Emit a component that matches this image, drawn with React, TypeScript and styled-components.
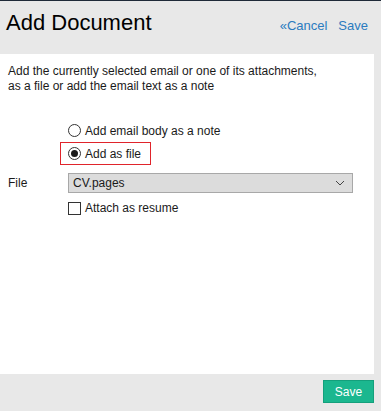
import React, { FC } from 'react';
import styled, { createGlobalStyle } from 'styled-components';

const GlobalStyle = createGlobalStyle`
  html, body {
    margin: 0;
    padding: 0;
    background: #e8e8e8;
  }
  body {
    font-family: "Liberation Sans", Arial, sans-serif;
  }
`;

const App: FC = () => {
  return (
    <PageStyled>
      <GlobalStyle />
      <HeaderStyled>
        <TitleStyled>Add Document</TitleStyled>
        <HeaderLinksStyled>
          <LinkStyled href="#">«Cancel</LinkStyled>
          <LinkStyled href="#">Save</LinkStyled>
        </HeaderLinksStyled>
      </HeaderStyled>

      <PanelStyled>
        <IntroStyled>
          Add the currently selected email or one of its attachments,
          <br />
          as a file or add the email text as a note
        </IntroStyled>

        <OptionGroupStyled>
          <OptionStyled>
            <RadioStyled $checked={false} />
            <span>Add email body as a note</span>
          </OptionStyled>
          <OptionStyled $highlighted>
            <RadioStyled $checked />
            <span>Add as file</span>
          </OptionStyled>
        </OptionGroupStyled>

        <FieldRowStyled>
          <FieldLabelStyled>File</FieldLabelStyled>
          <SelectStyled>
            <span>CV.pages</span>
            <svg width="10" height="6" viewBox="0 0 10 6">
              <path d="M1 1 L5 5 L9 1" fill="none" stroke="#444" strokeWidth="1" />
            </svg>
          </SelectStyled>
        </FieldRowStyled>

        <CheckRowStyled>
          <CheckboxStyled />
          <span>Attach as resume</span>
        </CheckRowStyled>
      </PanelStyled>

      <FooterStyled>
        <SaveButtonStyled>Save</SaveButtonStyled>
      </FooterStyled>
    </PageStyled>
  );
};

export default App;

const PageStyled = styled.div`
  width: 381px;
  height: 411px;
  background: #e8e8e8;
  border-top: 1px solid #1f2a38;
  box-sizing: border-box;
  display: flex;
  flex-direction: column;
`;

const HeaderStyled = styled.div`
  height: 53px;
  display: flex;
  justify-content: space-between;
  align-items: flex-start;
  padding: 0 13px 0 6px;
  flex-shrink: 0;
`;

const TitleStyled = styled.h1`
  margin: 9px 0 0 0;
  font-size: 22px;
  line-height: 26px;
  font-weight: normal;
  color: #000;
`;

const HeaderLinksStyled = styled.div`
  display: flex;
  gap: 11px;
  margin-top: 17px;
`;

const LinkStyled = styled.a`
  font-size: 13px;
  line-height: 15px;
  color: #2b7bbf;
  text-decoration: none;
`;

const PanelStyled = styled.div`
  background: #fff;
  margin-right: 7px;
  height: 320px;
  padding: 10px 8px 0 8px;
  box-sizing: border-box;
  font-size: 12px;
  color: #1a1a1a;
`;

const IntroStyled = styled.p`
  margin: 0;
  line-height: 15px;
`;

const OptionGroupStyled = styled.div`
  margin: 25px 0 0 52px;
  display: flex;
  flex-direction: column;
  align-items: flex-start;
`;

const OptionStyled = styled.label<{ $highlighted?: boolean }>`
  display: inline-flex;
  align-items: center;
  gap: 4px;
  height: 23px;
  padding: 0 7px;
  box-sizing: border-box;
  border: 1px solid ${(p) => (p.$highlighted ? '#e0242b' : 'transparent')};
  width: ${(p) => (p.$highlighted ? '91px' : 'auto')};
  font-size: 12px;
`;

const RadioStyled = styled.span<{ $checked: boolean }>`
  width: 13px;
  height: 13px;
  border-radius: 50%;
  border: 1px solid #333;
  box-sizing: border-box;
  display: inline-flex;
  align-items: center;
  justify-content: center;
  background: #fff;
  &::after {
    content: '';
    width: 7px;
    height: 7px;
    border-radius: 50%;
    background: ${(p) => (p.$checked ? '#1a1a1a' : 'transparent')};
  }
`;

const FieldRowStyled = styled.div`
  display: flex;
  align-items: center;
  margin-top: 8px;
`;

const FieldLabelStyled = styled.span`
  width: 60px;
  font-size: 12px;
`;

const SelectStyled = styled.div`
  width: 285px;
  height: 20px;
  box-sizing: border-box;
  border: 1px solid #a8a8a8;
  background: #dcdcdc;
  display: flex;
  align-items: center;
  justify-content: space-between;
  padding: 0 7px 0 4px;
  font-size: 12px;
`;

const CheckRowStyled = styled.label`
  display: flex;
  align-items: center;
  gap: 4px;
  margin: 8px 0 0 60px;
  font-size: 12px;
`;

const CheckboxStyled = styled.span`
  width: 13px;
  height: 13px;
  border: 1px solid #333;
  box-sizing: border-box;
  background: #fff;
`;

const FooterStyled = styled.div`
  display: flex;
  justify-content: flex-end;
  padding: 6px 7px 0 0;
`;

const SaveButtonStyled = styled.button`
  width: 51px;
  height: 23px;
  background: #1bb78f;
  border: 1px solid #14a07c;
  color: #fff;
  font-family: "Liberation Sans", Arial, sans-serif;
  font-size: 12px;
  padding: 0;
  cursor: pointer;
`;
